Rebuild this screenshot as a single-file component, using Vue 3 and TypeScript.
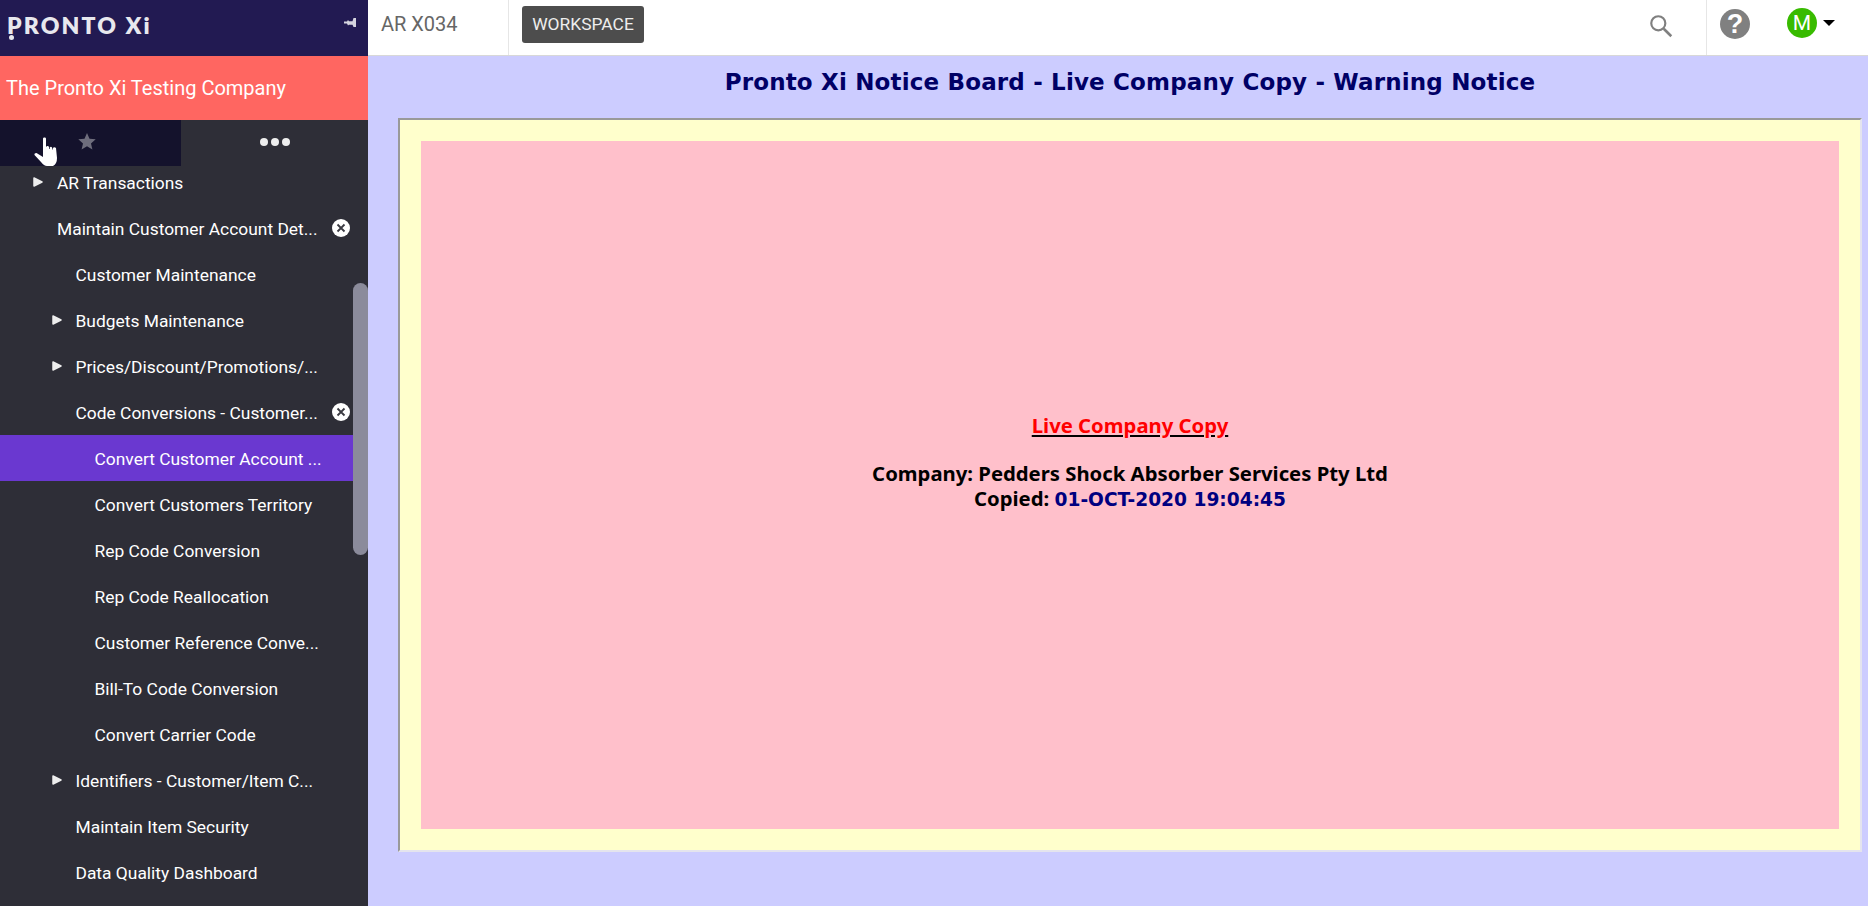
<script setup lang="ts">
interface Row { label: string; level: number; arrow?: boolean; close?: boolean; active?: boolean }
const rows: Row[] = [
  { label: 'AR Transactions', level: 1, arrow: true },
  { label: 'Maintain Customer Account Det...', level: 1, close: true },
  { label: 'Customer Maintenance', level: 2 },
  { label: 'Budgets Maintenance', level: 2, arrow: true },
  { label: 'Prices/Discount/Promotions/...', level: 2, arrow: true },
  { label: 'Code Conversions - Customer...', level: 2, close: true },
  { label: 'Convert Customer Account ...', level: 3, active: true },
  { label: 'Convert Customers Territory', level: 3 },
  { label: 'Rep Code Conversion', level: 3 },
  { label: 'Rep Code Reallocation', level: 3 },
  { label: 'Customer Reference Conve...', level: 3 },
  { label: 'Bill-To Code Conversion', level: 3 },
  { label: 'Convert Carrier Code', level: 3 },
  { label: 'Identifiers - Customer/Item C...', level: 2, arrow: true },
  { label: 'Maintain Item Security', level: 2 },
  { label: 'Data Quality Dashboard', level: 2 }
]
</script>

<template>
  <div class="app">
    <aside class="side">
      <div class="brand">
        <span class="logo">PRONTO Xi</span>
        <span class="logo-dot"></span>
        <svg class="pin" width="12" height="9" viewBox="0 0 12 9"><path d="M0 3.500H3L4 2l1 1.200H8.500L9.500 0H12V9H9.500L8.500 6.800H5L4 7.500 3 5.500H0z" fill="#d5d4df"/></svg>
      </div>
      <div class="company">The Pronto Xi Testing Company</div>
      <div class="tabs">
        <div class="tab dark">
          <svg width="18" height="17" viewBox="0 0 18 17"><path d="M9 0l2.500 5.700 6.200.6-4.700 4.100 1.400 6.100L9 13.300l-5.400 3.200L5 10.400.3 6.300l6.200-.6z" fill="#6e6d7c"/></svg>
        </div>
        <div class="tab">
          <span class="dot"></span><span class="dot"></span><span class="dot"></span>
        </div>
      </div>
      <div class="list">
        <div v-for="r in rows" :key="r.label" class="row" :class="[`l${r.level}`, { active: r.active }]">
          <svg v-if="r.arrow" class="arrow" width="10" height="10" viewBox="0 0 10 10"><path d="M1 1l8 4-8 4z" fill="#eeeeee" stroke="#eeeeee" stroke-width="1.500" stroke-linejoin="round"/></svg>
          <span>{{ r.label }}</span>
          <svg v-if="r.close" class="close" width="18" height="18" viewBox="0 0 18 18"><circle cx="9" cy="9" r="9" fill="#fff"/><path d="M5.500 5.500l7 7M12.500 5.500l-7 7" stroke="#3a3a42" stroke-width="1.800"/></svg>
        </div>
      </div>
      <div class="thumb"></div>
      <svg class="hand" width="24" height="30" viewBox="0 0 24 30">
        <path d="M9 1.500C9 0 12 0 12 1.500V10l1-1q1.500-.5 2 1v2h.7v-1.500q1.300-1.500 2.300 0v2h.7V11q1.800-1.500 3.300 0l1 10q0 6-4 8H13q-3 0-6-4L.5 18q-.5-2 2-2L9 20z" fill="#fff"/>
      </svg>
    </aside>
    <div class="right">
      <header class="top">
        <div class="code">AR X034</div>
        <div class="ws"><button class="wsbtn">WORKSPACE</button></div>
        <div class="spacer"></div>
        <svg class="search" width="24" height="24" viewBox="0 0 24 24"><circle cx="9.500" cy="9.500" r="6.500" fill="none" stroke="#808080" stroke-width="2"/><path d="M14.500 14.500l7 7" stroke="#808080" stroke-width="2.400"/></svg>
        <div class="tools">
          <div class="help">?</div>
          <div class="avatar">M</div>
          <span class="caret"></span>
        </div>
      </header>
      <main class="main">
        <h1 class="title">Pronto Xi Notice Board - Live Company Copy - Warning Notice</h1>
        <div class="frame">
          <div class="pink">
            <div class="live">Live Company Copy</div>
            <div class="gap">Company: Pedders Shock Absorber Services Pty Ltd</div>
            <div>Copied: <span class="date">01-OCT-2020 19:04:45</span></div>
          </div>
        </div>
      </main>
    </div>
  </div>
</template>

<style>
html, body { margin: 0; overflow: hidden; }
</style>

<style scoped>
.app { display: flex; width: 1868px; height: 906px; overflow: hidden; font-family: Roboto, "Liberation Sans", sans-serif; }
.side { position: relative; width: 368px; flex: none; background: #2e2e37; display: flex; flex-direction: column; overflow: hidden; }
.brand { position: relative; height: 56px; flex: none; background: #221a52; display: flex; align-items: center; justify-content: space-between; padding: 0 12px 0 7px; box-sizing: border-box; }
.logo { color: #e8e8ee; font: 800 23px/1 Lato, sans-serif; letter-spacing: 2.100px; margin-top: -6px; }
.logo-dot { position: absolute; left: 9px; top: 35px; width: 5px; height: 5px; border-radius: 50%; background: #e8e8ee; }
.pin { margin-top: -11px; }
.company { height: 64px; flex: none; background: #ff6661; color: #fff; font-size: 20px; line-height: 64px; padding-left: 6px; }
.tabs { position: relative; z-index: 1; height: 46px; flex: none; display: flex; background: #2e2e37; }
.tab { flex: 1; display: flex; align-items: center; justify-content: center; gap: 3px; padding-bottom: 3px; box-sizing: border-box; }
.tab.dark { flex: none; width: 181px; background: #14122c; padding-right: 7px; }
.dot { width: 8px; height: 8px; border-radius: 50%; background: #eee; }
.list { margin-top: -7px; }
.row { position: relative; height: 46px; width: 353px; box-sizing: border-box; color: #fff; font-size: 17.400px; line-height: 48px; white-space: nowrap; }
.row.l1 { padding-left: 57px; }
.row.l2 { padding-left: 75.500px; }
.row.l3 { padding-left: 94.500px; }
.row.active { background: #6a38d0; }
.arrow { position: absolute; top: 18px; }
.l1 .arrow { left: 33px; }
.l2 .arrow { left: 52px; }
.close { position: absolute; left: 332px; top: 14px; }
.thumb { position: absolute; left: 353px; top: 283px; width: 15px; height: 272px; border-radius: 8px; background: #8b8b9b; }
.hand { position: absolute; z-index: 2; left: 34px; top: 137px; }
.right { flex: 1; min-width: 0; display: flex; flex-direction: column; }
.top { height: 56px; flex: none; box-sizing: border-box; background: #fff; border-bottom: 1px solid #d8d8d8; display: flex; align-items: center; }
.code { width: 141px; box-sizing: border-box; padding-left: 13px; height: 100%; border-right: 1px solid #e6e6e6; line-height: 49px; font-size: 20px; color: #666; }
.ws { padding-left: 13px; }
.wsbtn { display: block; margin: 0 0 7px; width: 122px; height: 37px; border: 0; padding: 0; border-radius: 3px; background: #4d4d4d; color: #eee; font: 17.400px Roboto, sans-serif; }
.spacer { flex: 1; }
.search { margin: 0 32px 4px 0; width: 26px; height: 26px; }
.tools { position: relative; width: 162px; height: 100%; border-left: 1px solid #e6e6e6; box-sizing: border-box; }
.help { position: absolute; left: 13px; top: 9px; width: 30px; height: 30px; border-radius: 50%; background: #808080; color: #fff; font: 700 27px/30px "Liberation Sans", sans-serif; text-align: center; }
.avatar { position: absolute; left: 80px; top: 8px; width: 30px; height: 30px; border-radius: 50%; background: #38bb00; color: #fff; font: 400 21px/30px Roboto, sans-serif; text-align: center; }
.caret { position: absolute; left: 116px; top: 20px; border: 6px solid transparent; border-top-color: #000; border-bottom: 0; }
.main { flex: 1; min-height: 0; background: #ccccff; padding: 0 6px 0 30px; display: flex; flex-direction: column; }
.title { margin: 0; height: 62px; text-align: center; color: #000066; font: 700 23px/52px "DejaVu Sans", Verdana, sans-serif; letter-spacing: .17px; }
.frame { height: 734px; width: 1464px; box-sizing: border-box; background: #ffffcc; border: 2px solid; border-color: #999 #e4e4ee #e4e4ee #999; padding: 21px; }
.pink { box-sizing: border-box; height: 100%; width: 100%; background: #ffc0cb; text-align: center; font: 700 20.300px/25px "Noto Sans", sans-serif; color: #000; padding-top: 272px; }
.live { color: #f00; text-decoration: underline; text-decoration-color: #000; }
.gap { margin-top: 23px; }
.date { color: #000080; font-family: "DejaVu Sans", sans-serif; font-size: 18.600px; }
</style>
